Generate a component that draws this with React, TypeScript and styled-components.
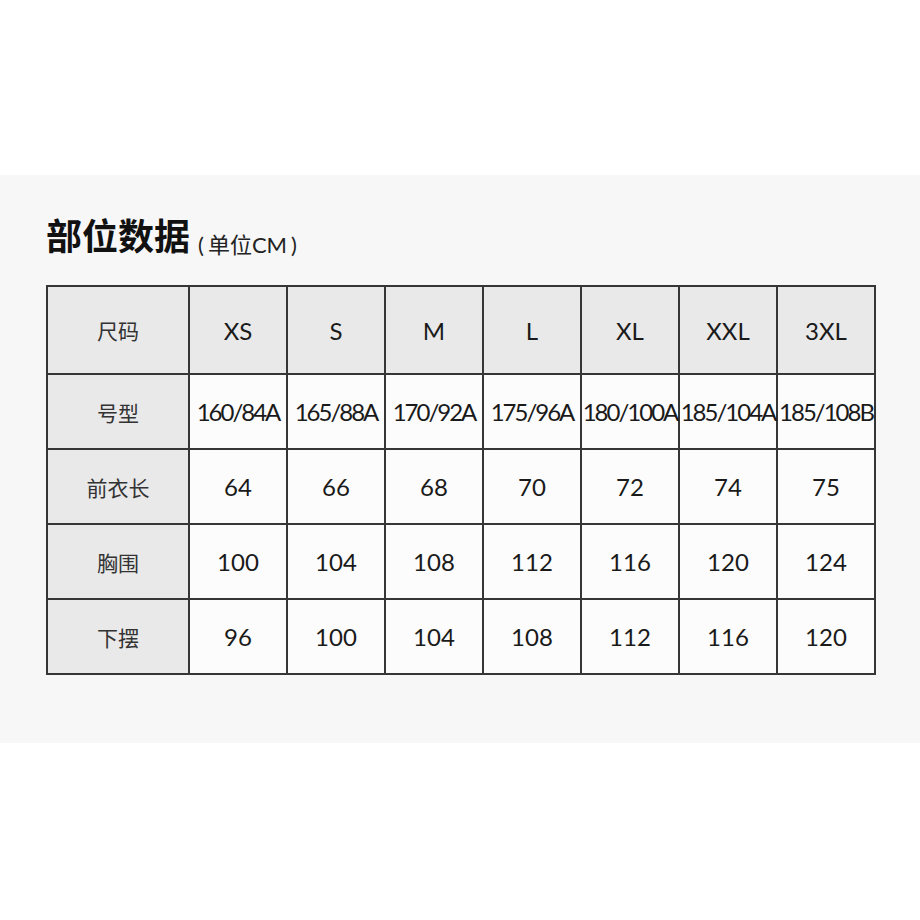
import React from 'react';
import styled, { createGlobalStyle } from 'styled-components';

const SIZES = ['XS', 'S', 'M', 'L', 'XL', 'XXL', '3XL'];

const ROWS = [
  { label: '号型', values: ['160/84A', '165/88A', '170/92A', '175/96A', '180/100A', '185/104A', '185/108B'] },
  { label: '前衣长', values: ['64', '66', '68', '70', '72', '74', '75'] },
  { label: '胸围', values: ['100', '104', '108', '112', '116', '120', '124'] },
  { label: '下摆', values: ['96', '100', '104', '108', '112', '116', '120'] },
];

const GlobalStyle = createGlobalStyle`
  html, body {
    margin: 0;
    padding: 0;
    background: #ffffff;
  }
`;

function App() {
  return (
    <Page>
      <GlobalStyle />
      <Band>
        <Title>
          部位数据
          <Unit>
            <Paren>(</Paren>单位CM<Paren>)</Paren>
          </Unit>
        </Title>
        <SizeTable>
          <colgroup>
            <col style={{ width: 142 }} />
            {SIZES.map((size) => (
              <col key={size} style={{ width: 98 }} />
            ))}
          </colgroup>
          <thead>
            <tr>
              <LabelCell as='th'>尺码</LabelCell>
              {SIZES.map((size) => (
                <ValueCell as='th' key={size} $head>
                  {size}
                </ValueCell>
              ))}
            </tr>
          </thead>
          <tbody>
            {ROWS.map((row) => (
              <tr key={row.label}>
                <LabelCell>{row.label}</LabelCell>
                {row.values.map((value, idx) => (
                  <ValueCell key={idx} $tight={value.length > 4}>
                    {value}
                  </ValueCell>
                ))}
              </tr>
            ))}
          </tbody>
        </SizeTable>
      </Band>
    </Page>
  );
}

const Page = styled.div`
  width: 920px;
  height: 920px;
  padding-top: 175px;
  box-sizing: border-box;
  background: #ffffff;
`;

const Band = styled.section`
  background: #f7f7f7;
  padding: 37px 46px 70px;
  height: 568px;
  box-sizing: border-box;
`;

const Title = styled.h1`
  margin: 0 0 21px;
  font-family: 'Noto Sans CJK SC', 'Noto Sans', sans-serif;
  font-size: 36px;
  font-weight: 700;
  line-height: 44px;
  color: #111111;
  display: flex;
  align-items: baseline;
`;

const Unit = styled.span`
  margin-left: 4px;
  position: relative;
  top: 3px;
  font-family: 'Lato', 'Noto Sans CJK SC', sans-serif;
  font-size: 22px;
  font-weight: 400;
  color: #222222;
`;

const Paren = styled.span`
  margin: 0 4px;
`;

const SizeTable = styled.table`
  border-collapse: collapse;
  table-layout: fixed;
  width: 828px;
  background: #fcfcfc;

  th,
  td {
    border: 2px solid #363636;
    padding: 0;
    text-align: center;
    vertical-align: middle;
    overflow: visible;
  }

  thead tr {
    height: 88px;
  }

  tbody tr {
    height: 75px;
  }
`;

const LabelCell = styled.td`
  background: #e9e9e9;
  font-family: 'Noto Sans CJK SC', sans-serif;
  font-size: 21px;
  font-weight: 400;
  color: #333333;
`;

const ValueCell = styled.td<{ $head?: boolean; $tight?: boolean }>`
  background: ${(p) => (p.$head ? '#e9e9e9' : '#fcfcfc')};
  font-family: 'Lato', 'Noto Sans', sans-serif;
  font-size: 24px;
  font-weight: 400;
  color: #1a1a1a;
  letter-spacing: ${(p) => (p.$tight ? '-2px' : '0')};
  white-space: nowrap;
`;

export default App;
